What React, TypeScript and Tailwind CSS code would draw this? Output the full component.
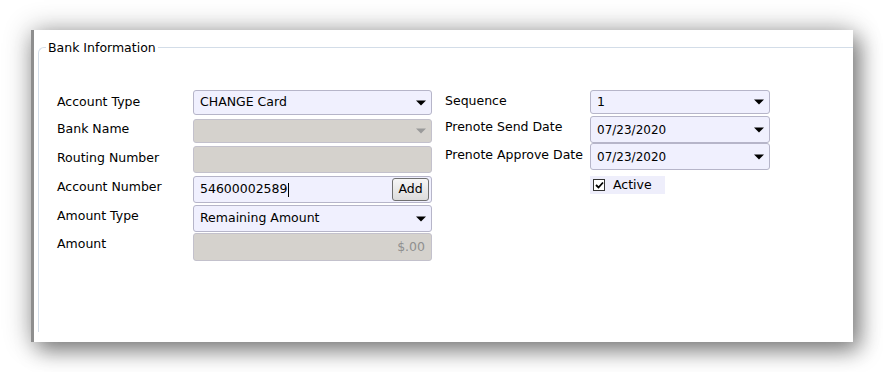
import React from "react";

const font = { fontFamily: '"DejaVu Sans", Tahoma, sans-serif' };

function Arrow({ grey }: { grey?: boolean }) {
  return (
    <svg width="10" height="6" viewBox="0 0 10 6" className="shrink-0">
      <path d="M0 0.5 L10 0.5 L5 5.5 Z" fill={grey ? "#9a9a9a" : "#000"} />
    </svg>
  );
}

function Select({ value, h, disabled, small }: { value: string; h: string; disabled?: boolean; small?: boolean }) {
  return (
    <div
      className={`${h} w-full flex items-center justify-between pl-[6px] pr-[5px] rounded-[3px] border ${
        disabled ? "bg-[#d5d2cd] border-[#c3c1cc]" : "bg-[#f0f0fe] border-[#b6b5c9]"
      } ${small ? "text-[12px]" : "text-[12.5px]"}`}
    >
      <span className="text-black leading-none">{value}</span>
      <Arrow grey={disabled} />
    </div>
  );
}

function Label({ children, h, pt }: { children: React.ReactNode; h: string; pt: string }) {
  return <div className={`${h} ${pt} text-[12.5px] text-black leading-none whitespace-nowrap`}>{children}</div>;
}

export default function App() {
  return (
    <div className="w-[883px] h-[372px] bg-white pt-[30px] pl-[31px]" style={font}>
      <div className="w-[822px] h-[312px] bg-white border-l-[3px] border-[#8e8e8e] pl-[4px] pt-[10px] shadow-[0_0_26px_rgba(0,0,0,0.3),7px_9px_20px_rgba(0,0,0,0.4)]">
        <fieldset className="h-[292px] border-l border-t border-[#d3dde8] rounded-tl-[6px]">
          <legend className="ml-[7px] px-[2px] text-[12.5px] leading-[15px] text-black">Bank Information</legend>
          <div className="flex pl-[18px] pt-[35px]">
            {/* left labels */}
            <div className="w-[136px] flex flex-col">
              <Label h="h-[29px]" pt="pt-[6px]">Account Type</Label>
              <Label h="h-[27px]" pt="pt-[4px]">Bank Name</Label>
              <Label h="h-[30px]" pt="pt-[6px]">Routing Number</Label>
              <Label h="h-[29px]" pt="pt-[5px]">Account Number</Label>
              <Label h="h-[28px]" pt="pt-[5px]">Amount Type</Label>
              <Label h="h-[28px]" pt="pt-[5px]">Amount</Label>
            </div>
            {/* left inputs */}
            <div className="w-[239px] flex flex-col">
              <div className="h-[29px]">
                <Select h="h-[25px]" value="CHANGE Card" />
              </div>
              <div className="h-[27px]">
                <Select h="h-[24px]" value="" disabled />
              </div>
              <div className="h-[30px]">
                <div className="h-[27px] w-full rounded-[3px] border bg-[#d5d2cd] border-[#c3c1cc]" />
              </div>
              <div className="h-[29px]">
                <div className="h-[27px] w-full rounded-[3px] border bg-[#f0f0fe] border-[#b6b5c9] flex items-center justify-between pl-[6px] pr-[2px]">
                  <span className="text-[12.5px] leading-none text-black flex items-center">
                    54600002589<span className="inline-block w-[1px] h-[14px] bg-black ml-[1px]" />
                  </span>
                  <button className="h-[23px] w-[37px] rounded-[3px] border border-[#707070] bg-gradient-to-b from-[#f6f6f6] to-[#dcdcdc] text-[12.5px] leading-none text-black">
                    Add
                  </button>
                </div>
              </div>
              <div className="h-[28px]">
                <Select h="h-[27px]" value="Remaining Amount" />
              </div>
              <div className="h-[28px]">
                <div className="h-[28px] w-full rounded-[3px] border bg-[#d5d2cd] border-[#c3c1cc] flex items-center justify-end pr-[6px]">
                  <span className="text-[12.5px] leading-none text-[#8f8f8f]">$.00</span>
                </div>
              </div>
            </div>
            {/* right labels */}
            <div className="w-[145px] ml-[13px] flex flex-col">
              <Label h="h-[26px]" pt="pt-[5px]">Sequence</Label>
              <Label h="h-[27px]" pt="pt-[5px]">Prenote Send Date</Label>
              <Label h="h-[27px]" pt="pt-[6px]">Prenote Approve Date</Label>
            </div>
            {/* right inputs */}
            <div className="w-[180px] flex flex-col">
              <div className="h-[26px]">
                <Select h="h-[24px]" value="1" />
              </div>
              <div className="h-[27px]">
                <Select h="h-[27px]" value="07/23/2020" small />
              </div>
              <div className="h-[33px]">
                <Select h="h-[27px]" value="07/23/2020" small />
              </div>
              <div className="w-[75px] h-[18px] bg-[#eeeefb] flex items-center pl-[3px]">
                <span className="w-[12px] h-[12px] border border-[#333] bg-white flex items-center justify-center">
                  <svg width="9" height="8" viewBox="0 0 9 8">
                    <path d="M1 4 L3.5 6.5 L8 1.5" stroke="#000" strokeWidth="1.8" fill="none" />
                  </svg>
                </span>
                <span className="ml-[8px] text-[12.5px] leading-none text-black">Active</span>
              </div>
            </div>
          </div>
        </fieldset>
      </div>
    </div>
  );
}
